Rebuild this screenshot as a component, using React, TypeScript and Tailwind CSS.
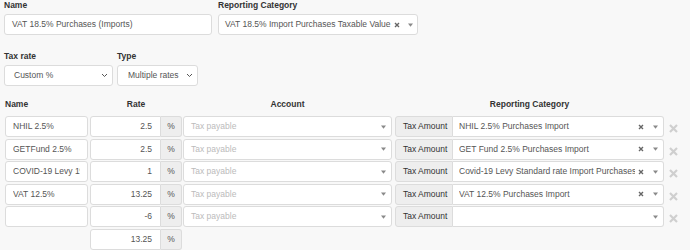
import React from 'react';

const box = 'bg-white border border-[#dcdcdc] flex items-center';

function Caret() {
  return (
    <svg width="5" height="4" viewBox="0 0 5 4" className="shrink-0">
      <path d="M0 0.5h5L2.5 3.8z" fill="#8a8a8a" />
    </svg>
  );
}

function Clear() {
  return (
    <svg width="6" height="6" viewBox="0 0 6 6" className="shrink-0">
      <path d="M1 1l4 4M5 1l-4 4" stroke="#666" strokeWidth="1.4" />
    </svg>
  );
}

function Chevron() {
  return (
    <svg width="7" height="5" viewBox="0 0 7 5" className="shrink-0">
      <path d="M1 1l2.5 2.5L6 1" stroke="#555" strokeWidth="1" fill="none" />
    </svg>
  );
}

function Remove() {
  return (
    <svg width="9" height="9" viewBox="0 0 9 9" className="mt-[8px] shrink-0">
      <path d="M1 1l7 7M8 1l-7 7" stroke="#cfcfcf" strokeWidth="2.2" />
    </svg>
  );
}

type Row = { name: string; rate: string; category: string };

const rows: Row[] = [
  { name: 'NHIL 2.5%', rate: '2.5', category: 'NHIL 2.5% Purchases Import' },
  { name: 'GETFund 2.5%', rate: '2.5', category: 'GET Fund 2.5% Purchases Import' },
  { name: 'COVID-19 Levy 1%', rate: '1', category: 'Covid-19 Levy Standard rate Import Purchases' },
  { name: 'VAT 12.5%', rate: '13.25', category: 'VAT 12.5% Purchases Import' },
  { name: '', rate: '-6', category: '' },
];

function RateGroup({ value, total }: { value: string; total?: boolean }) {
  return (
    <div className="flex h-full">
      <div
        className={`${box} w-[71px] h-full rounded-l-[3px] justify-end pr-[8px] text-[#555] ${total ? 'bg-[#eeeeee]' : ''}`}
      >
        {value}
      </div>
      <div className="w-[21px] h-full bg-[#eeeeee] border border-l-0 border-[#dcdcdc] rounded-r-[3px] flex items-center justify-center text-[#555]">
        %
      </div>
    </div>
  );
}

function TableRow({ row }: { row: Row }) {
  return (
    <div className="flex h-[21px] items-start">
      <div className={`${box} ml-[1px] w-[83px] h-full rounded-[3px] px-[7px] text-[#555] overflow-hidden whitespace-nowrap`}>
        <span className="overflow-hidden block w-full">{row.name}</span>
      </div>
      <div className="ml-[2px] h-full">
        <RateGroup value={row.rate} />
      </div>
      <div className={`${box} ml-[1px] w-[209px] h-full rounded-[3px] pl-[7px] pr-[5px] justify-between`}>
        <span className="text-[#bbbbbb]">Tax payable</span>
        <Caret />
      </div>
      <div className="ml-[3px] flex h-full">
        <div className="w-[58px] h-full bg-[#eeeeee] border border-[#dcdcdc] rounded-l-[3px] flex items-center pl-[7px] text-[#333] whitespace-nowrap">
          Tax Amount
        </div>
        <div className={`${box} w-[211px] h-full border-l-0 rounded-r-[3px] pl-[6px] pr-[5px]`}>
          <span className="flex-1 whitespace-nowrap overflow-hidden text-[#555]">{row.category}</span>
          {row.category && (
            <span className="ml-[3px] mr-[9px]">
              <Clear />
            </span>
          )}
          <Caret />
        </div>
      </div>
      <div className="ml-[5px]">
        <Remove />
      </div>
    </div>
  );
}

export default function App() {
  return (
    <div className="min-h-screen bg-[#f8f8f8] px-[4px] text-[8.5px] font-['Liberation_Sans',Arial,sans-serif] text-[#555]">
      <div className="flex gap-[6px]">
        <div className="w-[208px]">
          <div className="h-[14px] leading-[11px] font-bold text-[#333]">Name</div>
          <div className={`${box} h-[21px] rounded-[3px] px-[7px]`}>VAT 18.5% Purchases (Imports)</div>
        </div>
        <div className="w-[200px]">
          <div className="h-[14px] leading-[11px] font-bold text-[#333]">Reporting Category</div>
          <div className={`${box} h-[21px] rounded-[3px] pl-[6px] pr-[6px]`}>
            <span className="flex-1 whitespace-nowrap">VAT 18.5% Import Purchases Taxable Value</span>
            <span className="ml-[3px] mr-[8px]">
              <Clear />
            </span>
            <Caret />
          </div>
        </div>
      </div>

      <div className="mt-[16px] flex gap-[4px]">
        <div className="w-[109px]">
          <div className="h-[14px] leading-[11px] font-bold text-[#333]">Tax rate</div>
          <div className={`${box} h-[21px] rounded-[3px] pl-[9px] pr-[4px] justify-between`}>
            <span>Custom %</span>
            <Chevron />
          </div>
        </div>
        <div className="w-[81px]">
          <div className="h-[14px] leading-[11px] font-bold text-[#333]">Type</div>
          <div className={`${box} h-[21px] rounded-[3px] pl-[10px] pr-[4px] justify-between`}>
            <span className="whitespace-nowrap">Multiple rates</span>
            <Chevron />
          </div>
        </div>
      </div>

      <div className="mt-[13px] flex h-[11px] leading-[11px] font-bold text-[#333]">
        <div className="ml-[1px] w-[83px]">Name</div>
        <div className="ml-[2px] w-[92px] text-center">Rate</div>
        <div className="ml-[1px] w-[209px] text-center">Account</div>
        <div className="ml-[3px] w-[269px] text-center">Reporting Category</div>
      </div>

      <div className="mt-[6px] flex flex-col gap-[1.5px]">
        {rows.map((r, i) => (
          <TableRow key={i} row={r} />
        ))}
        <div className="flex h-[21px]">
          <div className="ml-[86px] h-full">
            <RateGroup value="13.25" total />
          </div>
        </div>
      </div>
    </div>
  );
}
